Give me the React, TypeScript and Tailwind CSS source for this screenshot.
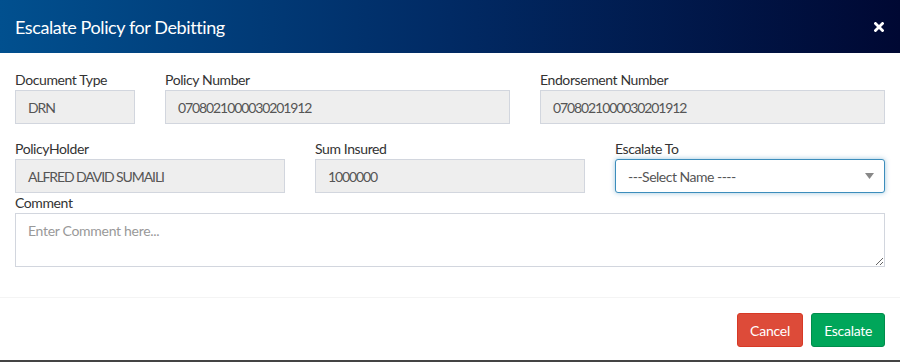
const font = { fontFamily: '"Source Sans Pro", Lato, "Liberation Sans", sans-serif' };

function Field({ label, value, className }: { label: string; value: string; className?: string }) {
  return (
    <div className={className}>
      <label className="block h-5 leading-5 text-[14px] tracking-[-0.4px] text-[#333]">{label}</label>
      <div className="h-[34px] border border-[#d2d6de] bg-[#eeeeee] px-3 flex items-center text-[14px] tracking-[-1.1px] text-[#555]">
        {value}
      </div>
    </div>
  );
}

export default function App() {
  return (
    <div className="w-[900px] h-[362px] bg-white flex flex-col" style={font}>
      {/* Header */}
      <div className="h-[53px] shrink-0 flex items-center justify-between px-[15px] bg-[linear-gradient(to_right,#01508f,#012a64_50%,#000833)]">
        <h4 className="text-[18px] tracking-[-0.4px] text-white leading-none">Escalate Policy for Debitting</h4>
        <svg width="10" height="10" viewBox="0 0 10 10" className="mr-[1px]">
          <path d="M1.5 1.5L8.5 8.5M8.5 1.5L1.5 8.5" stroke="#fff" strokeWidth="2.8" strokeLinecap="square" />
        </svg>
      </div>

      {/* Body */}
      <div className="flex-1 px-[15px] pt-[17px]">
        <div className="flex gap-[30px]">
          <Field label="Document Type" value="DRN" className="w-[120px]" />
          <Field label="Policy Number" value="0708021000030201912" className="w-[345px]" />
          <Field label="Endorsement Number" value="0708021000030201912" className="w-[345px]" />
        </div>
        <div className="flex gap-[30px] mt-[15px]">
          <Field label="PolicyHolder" value="ALFRED DAVID SUMAILI" className="w-[270px]" />
          <Field label="Sum Insured" value="1000000" className="w-[270px]" />
          <div className="w-[270px]">
            <label className="block h-5 leading-5 text-[14px] tracking-[-0.4px] text-[#333]">Escalate To</label>
            <div className="h-[34px] border border-[#3c8dbc] rounded-[3px] shadow-[0_0_5px_rgba(60,141,188,0.5)] bg-white pl-3 pr-[10px] flex items-center justify-between text-[14px] tracking-[-0.5px] text-[#555]">
              <span>---Select Name ----</span>
              <svg width="9" height="6" viewBox="0 0 9 6">
                <path d="M0 0H9L4.5 6Z" fill="#888" />
              </svg>
            </div>
          </div>
        </div>
        <label className="block h-5 leading-5 text-[14px] tracking-[-0.4px] text-[#333]">Comment</label>
        <textarea
          placeholder="Enter Comment here..."
          className="block w-[870px] h-[54px] border border-[#d2d6de] px-3 py-[6px] text-[14px] tracking-[-0.3px] text-[#555] placeholder:text-[#999] outline-none"
        />
      </div>

      {/* Footer */}
      <div className="border-t border-[#f4f4f4] px-[15px] pt-[15px] pb-[13px] flex justify-end gap-2 border-b-2 border-b-[#444]">
        <button className="h-[34px] px-3 rounded-[3px] border border-[#d73925] bg-[#dd4b39] text-white text-[14px] tracking-[-0.2px]">Cancel</button>
        <button className="h-[34px] px-3 rounded-[3px] border border-[#008d4c] bg-[#00a65a] text-white text-[14px] tracking-[-0.3px]">Escalate</button>
      </div>
    </div>
  );
}
